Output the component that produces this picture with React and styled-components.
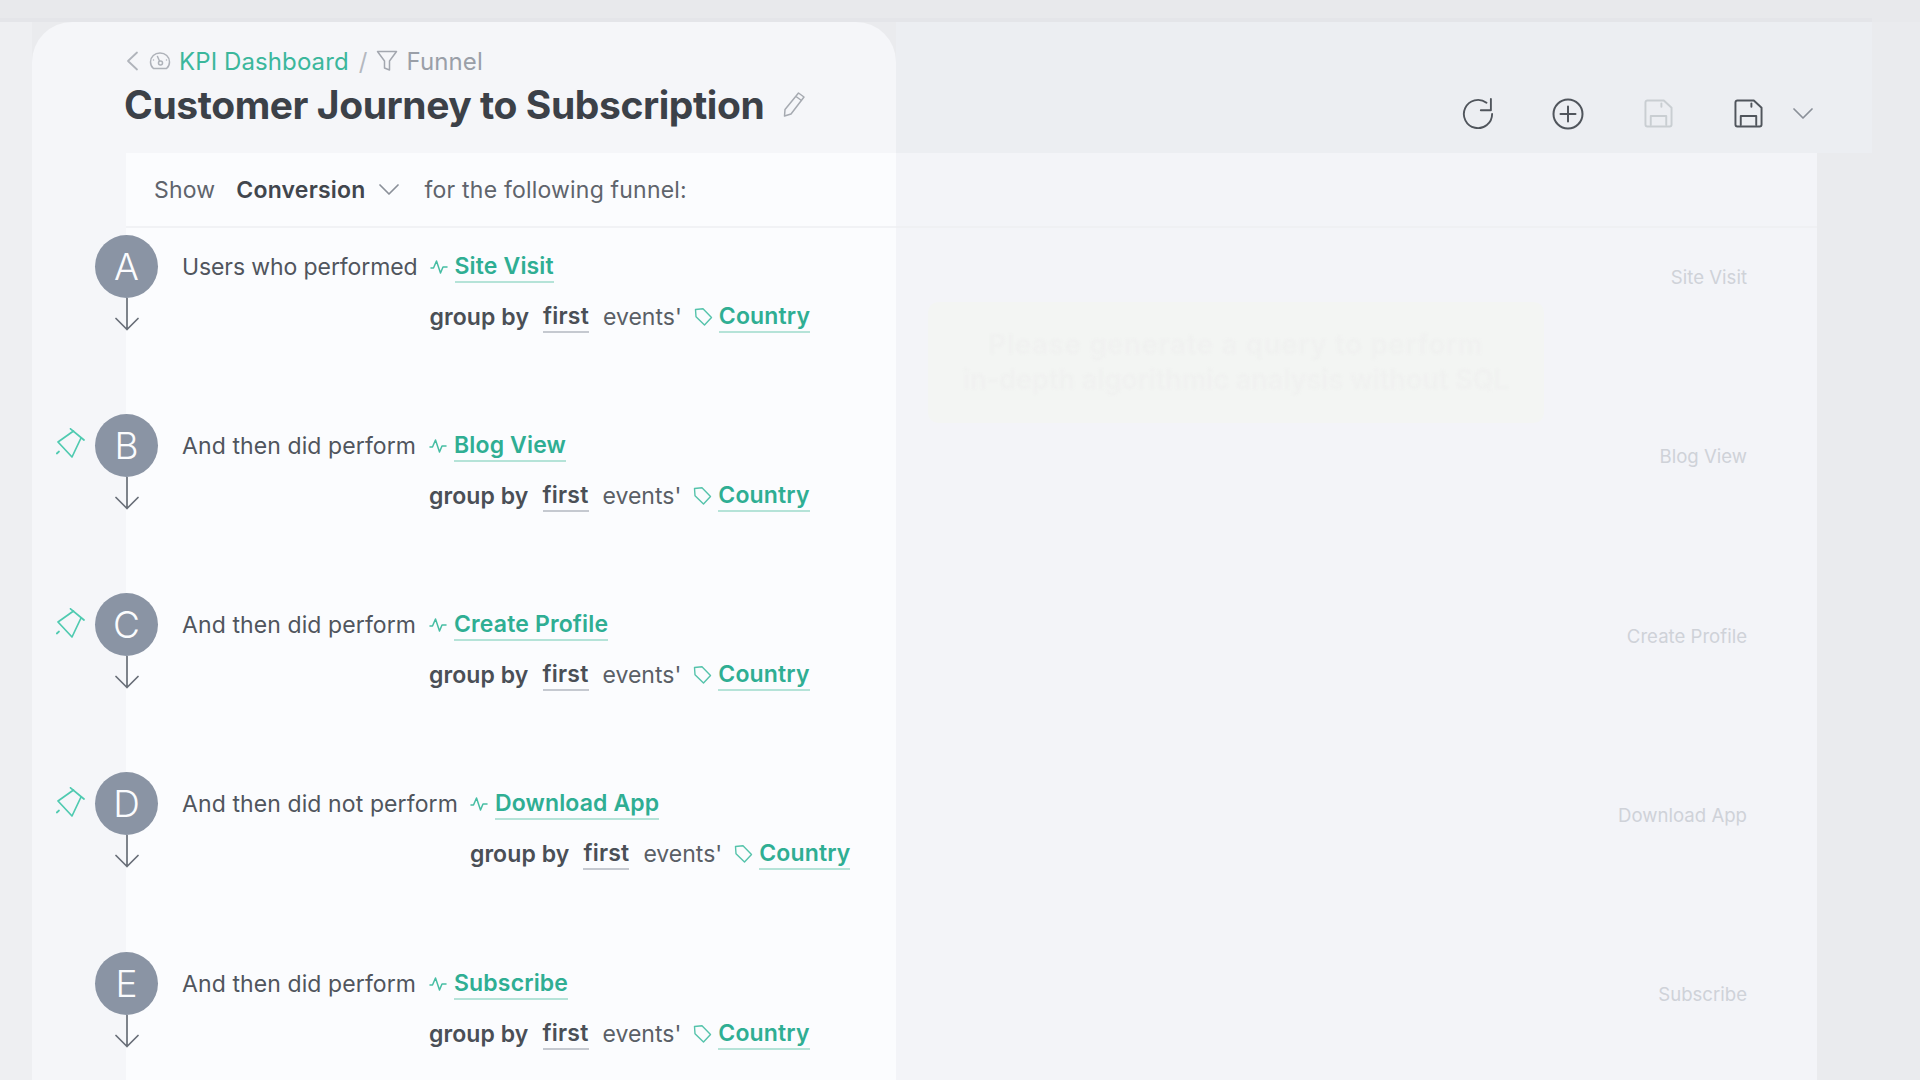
import React from "react";
import styled, { createGlobalStyle } from "styled-components";

const Global = createGlobalStyle`
  html, body { margin: 0; padding: 0; background: #eaebee; }
  * { box-sizing: border-box; }
`;

const Page = styled.div`
  width: 1920px; height: 1080px; overflow: hidden; display: flex; flex-direction: column;
  background: #eaebee; font-family: Inter, "Liberation Sans", sans-serif; color: #4a4f57;
`;
const TopStrip = styled.div`height: 22px; flex: none; background: #e8e9ec; padding-top: 18px;`;
const TopLine = styled.div`height: 4px; margin-right: 48px; background: #e4e5e9;`;
const Main = styled.div`display: flex; flex: 1; min-height: 0;`;
const Gutter = styled.div`width: 32px; flex: none; background: #eeeff2;`;
const Spot = styled.section`
  width: 864px; flex: none; background: #f5f6f9; border-radius: 40px 40px 0 0;
  display: flex; flex-direction: column;
`;
const SpotHead = styled.header`height: 131px; flex: none; padding: 21px 0 0 92px;`;
const Crumbs = styled.nav`
  display: flex; align-items: center; height: 36px; font-size: 24px; font-weight: 400; color: #9a9fa8;
  letter-spacing: 0.1px; margin-left: 1px;
`;
const CrumbLink = styled.span`color: #3bb79c;`;
const Slash = styled.span`color: #b4b8bf; margin: 0 9px 0 10px;`;
const Title = styled.h1`
  display: flex; align-items: center; margin: 2px 0 0; font-size: 39px; line-height: 48px; font-weight: 700;
  color: #3c4148; letter-spacing: -0.43px;
`;
const Panel = styled.div`flex: 1; margin-left: 94px; background: #fbfcfe; min-height: 0;`;
const Toolbar = styled.div`
  height: 75px; display: flex; align-items: center; padding-left: 28px; font-size: 23px;
  border-bottom: 2px solid #f1f2f5; color: #5f646c; letter-spacing: 0.2px;
`;
const Metric = styled.span`font-weight: 600; color: #41464d; margin-left: 21px;`;
const MetricCaret = styled.span`display: inline-flex; margin: 0 26px 0 13px;`;
const Row = styled.div`
  position: relative; height: 179.25px; flex: none; display: flex; padding-top: 6.5px; align-items: flex-start;
`;
const Marker = styled.div`
  width: 63px; margin-left: -31px; flex: none; display: flex; flex-direction: column; align-items: center;
`;
const Circle = styled.div`
  width: 63px; height: 63px; border-radius: 50%; background: #8a94a4; color: #fbfcfe;
  display: flex; align-items: center; justify-content: center; font-size: 37px; font-weight: 300;
`;
const PinSlot = styled.div`position: absolute; left: -70px; top: 21px; width: 30px; height: 32px;`;
const Query = styled.div`
  display: grid; grid-template-columns: auto auto; justify-content: start; column-gap: 12px;
  margin-left: 24px; font-size: 23px;
`;
const Line = styled.div`display: flex; align-items: center; height: 50px; margin-top: ${p => p.$first ? "7px" : "0"};`;
const Lead = styled(Line)`
  color: #50555d; min-width: 235px; white-space: nowrap;
  letter-spacing: ${p => p.$tight ? "-0.1px" : "0.1px"};
`;
const EventIcon = styled.span`display: inline-flex; margin-right: 7px;`;
const Link = styled.span`
  color: #2fae93; font-weight: 600; border-bottom: 2px solid #b5e3d8; line-height: 30px; height: 32px; letter-spacing: 0.15px;
`;
const Strong = styled.span`font-weight: 600; color: #4a4f56; white-space: nowrap; letter-spacing: 0.1px;`;
const First = styled.span`
  font-weight: 600; color: #4a4f56; margin: 0 14px 0 14px; border-bottom: 2px solid #c5c9d0; line-height: 30px; height: 32px;
  letter-spacing: 0.2px;
`;
const Plain = styled.span`color: #5a5f66; white-space: nowrap;`;
const TagSlot = styled.span`display: inline-flex; margin-left: 10px;`;

const Side = styled.section`flex: 1; min-width: 0; display: flex; flex-direction: column;`;
const SideHead = styled.div`
  height: 131px; flex: none; background: #eceef2; margin-right: 48px; display: flex;
  align-items: center; justify-content: flex-end; padding: 52px 59px 0 0;
`;
const ToolButton = styled.span`display: inline-flex; width: 32px; justify-content: center; margin-left: 58px;`;
const Caret = styled.span`display: inline-flex; margin-left: 29px;`;
const Chart = styled.div`
  position: relative; flex: 1; margin-right: 103px; background: #f3f4f8; min-height: 0;
`;
const ChartTop = styled.div`height: 75px; border-bottom: 2px solid #eff0f3;`;
const ChartRow = styled.div`
  height: 179.25px; text-align: right; padding: 37px 70px 0 0; font-size: 18.6px; line-height: 24px; color: #cfd2d8;
`;
const Ghost = styled.div`
  position: absolute; left: 32px; top: 149px; width: 616px; height: 121px; background: #f3f5f3; border-radius: 10px;
  display: flex; flex-direction: column; align-items: center; justify-content: center; gap: 3px;
  overflow: hidden; white-space: nowrap;
`;
const GhostLine = styled.span`
  font-size: 27px; line-height: 32px; font-weight: 600; color: #f0f1f0; filter: blur(1.3px);
  letter-spacing: ${p => p.$wide ? "1px" : "0"};
`;

const s = { fill: "none", stroke: "currentColor", strokeLinecap: "round", strokeLinejoin: "round" };

const ChevronLeft = () => (
  <svg width="14" height="20" viewBox="0 0 14 20" style={{ marginRight: 10, color: "#b0b4bb" }} {...s} strokeWidth="1.8"><path d="M12 1.500 3 10l9 8.500" /></svg>
);
const Gauge = () => (
  <svg width="22" height="20" viewBox="0 0 22 20" style={{ marginRight: 8, color: "#aeb2b9" }} {...s} strokeWidth="1.500">
    <path d="M4.500 17.500h13c1.800-1.600 3-4 3-6.600C20.500 5.700 16.300 2 11 2S1.500 5.700 1.500 10.900c0 2.600 1.200 5 3 6.600Z" />
    <circle cx="11.500" cy="12" r="2" /><path d="M10.500 10 8.500 5.500M4.500 9h0M17.500 9h0" />
  </svg>
);
const Funnel = () => (
  <svg width="22" height="22" viewBox="0 0 22 22" style={{ marginRight: 8, color: "#a3a7af" }} {...s} strokeWidth="1.500"><path d="M1.500 1.500h19L13.500 11v9l-5-2v-7Z" /></svg>
);
const Pencil = () => (
  <svg width="24" height="26" viewBox="0 0 24 26" style={{ marginLeft: 18, marginTop: -2, color: "#a6aab1" }} {...s} strokeWidth="1.500"><path d="M16.500 2 22 6 9 23l-6.500 2 .5-6.500ZM14 5.500l5.500 4" /></svg>
);
const Chevron = ({ color = "#8b9099" }) => (
  <svg width="20" height="11" viewBox="0 0 20 11" style={{ color }} {...s} strokeWidth="1.700"><path d="M1 1l9 9 9-9" /></svg>
);
const Pulse = () => (
  <svg width="18" height="18" viewBox="0 0 18 18" style={{ color: "#45bda3" }} {...s} strokeWidth="1.500"><path d="M1 10h2.500L6.500 3l4 12 2.500-6h4" /></svg>
);
const TagIcon = () => (
  <svg width="20" height="20" viewBox="0 0 20 20" style={{ color: "#55c3ab", marginRight: 5, marginLeft: 2 }} {...s} strokeWidth="1.400"><path d="M1.500 2.500 9 1.800l8.500 8.700-7 7.500L2 9.700Z" /></svg>
);
const Pin = () => (
  <svg width="30" height="32" viewBox="0 0 30 32" style={{ color: "#4fcab0" }} {...s} strokeWidth="1.700">
    <path d="M17.500 3 2 14l14 15 9-19M14.500.8 28 12" /><path d="M.8 25.500 3 23.500" />
  </svg>
);
const Arrow = () => (
  <svg width="26" height="33" viewBox="0 0 26 33" style={{ color: "#686e77", display: "block" }} {...s} strokeWidth="1.700"><path d="M13 0v31.500M2 20.500l11 11 11-11" /></svg>
);
const Refresh = () => (
  <svg width="34" height="34" viewBox="0 0 34 34" style={{ color: "#50555c" }} {...s} strokeWidth="2"><path d="M26 5A15 15 0 1 0 32 17M30.700 1v12H20" /></svg>
);
const Plus = () => (
  <svg width="32" height="32" viewBox="0 0 32 32" style={{ color: "#50555c" }} {...s} strokeWidth="2"><circle cx="16" cy="16" r="14.500" /><path d="M16 8.500v15M8.500 16h15" /></svg>
);
const Save = ({ color }) => (
  <svg width="29" height="29" viewBox="0 0 30 30" style={{ color }} {...s} strokeWidth="2"><path d="M3.500 1.500h17L28.500 9v17.500a2 2 0 0 1-2 2h-23a2 2 0 0 1-2-2v-23a2 2 0 0 1 2-2Z" /><path d="M7 27v-9.500h16V27M18 4.500v3.500" /></svg>
);

const steps = [
  { id: "A", lead: "Users who performed", event: "Site Visit", tight: true },
  { id: "B", lead: "And then did perform", event: "Blog View", pin: true },
  { id: "C", lead: "And then did perform", event: "Create Profile", pin: true },
  { id: "D", lead: "And then did not perform", event: "Download App", pin: true },
  { id: "E", lead: "And then did perform", event: "Subscribe" },
];

export default function App() {
  return (
    <Page>
      <Global />
      <TopStrip><TopLine /></TopStrip>
      <Main>
        <Gutter />
        <Spot>
          <SpotHead>
            <Crumbs>
              <ChevronLeft /><Gauge /><CrumbLink>KPI Dashboard</CrumbLink><Slash>/</Slash><Funnel />Funnel
            </Crumbs>
            <Title>Customer Journey to Subscription<Pencil /></Title>
          </SpotHead>
          <Panel>
            <Toolbar>
              Show<Metric>Conversion</Metric>
              <MetricCaret><Chevron /></MetricCaret>
              for the following funnel:
            </Toolbar>
            {steps.map(st => (
              <Row key={st.id}>
                {st.pin && <PinSlot><Pin /></PinSlot>}
                <Marker><Circle>{st.id}</Circle><Arrow /></Marker>
                <Query>
                  <Lead $first $tight={st.tight}>{st.lead}</Lead>
                  <Line $first><EventIcon><Pulse /></EventIcon><Link>{st.event}</Link></Line>
                  <span />
                  <Line>
                    <Strong>group by</Strong><First>first</First><Plain>events'</Plain>
                    <TagSlot><TagIcon /></TagSlot><Link>Country</Link>
                  </Line>
                </Query>
              </Row>
            ))}
          </Panel>
        </Spot>
        <Side>
          <SideHead>
            <ToolButton><Refresh /></ToolButton>
            <ToolButton><Plus /></ToolButton>
            <ToolButton><Save color="#c9ced2" /></ToolButton>
            <ToolButton><Save color="#50555c" /></ToolButton>
            <Caret><Chevron /></Caret>
          </SideHead>
          <Chart>
            <ChartTop />
            {steps.map(st => <ChartRow key={st.id}>{st.event}</ChartRow>)}
            <Ghost>
              <GhostLine $wide>Please generate a query to perform</GhostLine>
              <GhostLine>in-depth algorithmic analysis without SQL</GhostLine>
            </Ghost>
          </Chart>
        </Side>
      </Main>
    </Page>
  );
}
